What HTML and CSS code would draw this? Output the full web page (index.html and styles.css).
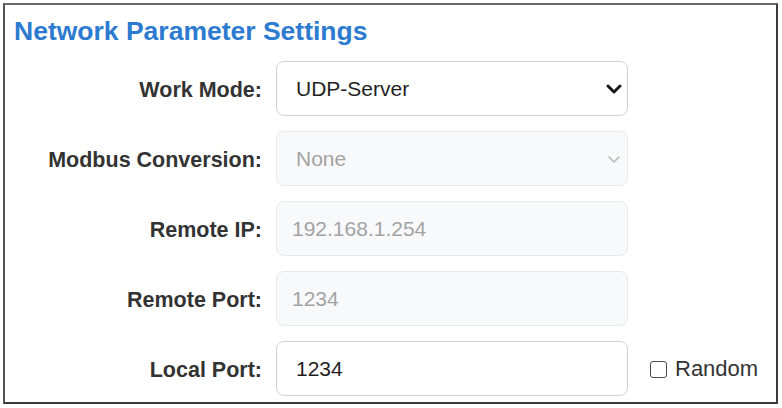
FILE: index.html
```html
<!DOCTYPE html>
<html lang="en">
<head>
<meta charset="utf-8">
<title>Network Parameter Settings</title>
<link rel="stylesheet" href="styles.css">
</head>
<body>
<section class="panel">
  <h2 class="panel-title">Network Parameter Settings</h2>
  <form class="settings">
    <label class="field-label" for="work-mode">Work Mode:</label>
    <div class="control">
      <select id="work-mode" class="select">
        <option>UDP-Server</option>
      </select>
      <svg class="chevron" viewBox="0 0 16 10" aria-hidden="true"><path d="M2 2l6 6 6-6"/></svg>
    </div>
    <span></span>

    <label class="field-label" for="modbus">Modbus Conversion:</label>
    <div class="control">
      <select id="modbus" class="select" disabled>
        <option>None</option>
      </select>
      <svg class="chevron chevron-off" viewBox="0 0 16 10" aria-hidden="true"><path d="M3 3l5 5 5-5"/></svg>
    </div>
    <span></span>

    <label class="field-label" for="remote-ip">Remote IP:</label>
    <input id="remote-ip" class="input" type="text" value="192.168.1.254" disabled>
    <span></span>

    <label class="field-label" for="remote-port">Remote Port:</label>
    <input id="remote-port" class="input" type="text" value="1234" disabled>
    <span></span>

    <label class="field-label" for="local-port">Local Port:</label>
    <input id="local-port" class="input input-local" type="text" value="1234">
    <label class="check">
      <input type="checkbox" class="check-box">
      <span>Random</span>
    </label>
  </form>
</section>
</body>
</html>
```

FILE: styles.css
```css
* {
  box-sizing: border-box;
}

body {
  margin: 3px;
  background: #ffffff;
  font-family: "Liberation Sans", Arial, sans-serif;
}

.panel {
  width: 775px;
  height: 401px;
  border: 2px solid #3c3c3c;
  border-top-color: #6a6a6a;
  border-left-color: #555;
  background: #fff;
}

.panel-title {
  margin: 11px 0 0 9px;
  font-size: 26.5px;
  line-height: 30px;
  font-weight: bold;
  color: #2d7bd0;
}

.settings {
  display: grid;
  grid-template-columns: 257px 352px auto;
  grid-auto-rows: 55px;
  column-gap: 14px;
  row-gap: 15px;
  margin-top: 15px;
  align-items: center;
}

.field-label {
  padding-top: 3px;
  text-align: right;
  font-size: 21.5px;
  font-weight: bold;
  color: #333;
}

.control {
  position: relative;
  height: 55px;
}

.select,
.input {
  width: 100%;
  height: 55px;
  margin: 0;
  border: 1px solid #d2d2d2;
  border-radius: 8px;
  background: #fff;
  color: #1f1f1f;
  font-family: "Liberation Sans", Arial, sans-serif;
  font-size: 21px;
}

.select {
  appearance: none;
  -webkit-appearance: none;
  padding: 0 40px 0 19px;
}

.input {
  padding: 0 15px;
}

.input-local {
  padding-left: 19px;
}

.select:disabled,
.input:disabled {
  background: #f8f9fa;
  border-color: #e8e9ea;
  color: #a3a3a3;
  opacity: 1;
}

.chevron {
  position: absolute;
  right: 6px;
  top: 23px;
  width: 16px;
  height: 10px;
  fill: none;
  stroke: #1a1a1a;
  stroke-width: 3;
  stroke-linecap: round;
  stroke-linejoin: round;
  pointer-events: none;
}

.chevron-off {
  stroke: #b8b8b8;
  stroke-width: 1.6;
}

.check {
  display: flex;
  align-items: center;
  margin-left: 8px;
  font-size: 22px;
  color: #333;
}

.check-box {
  width: 17px;
  height: 17px;
  margin: 2px 8px 0 0;
  appearance: none;
  -webkit-appearance: none;
  border: 1.5px solid #4a4a4a;
  border-radius: 3px;
  background: #fff;
}
```
